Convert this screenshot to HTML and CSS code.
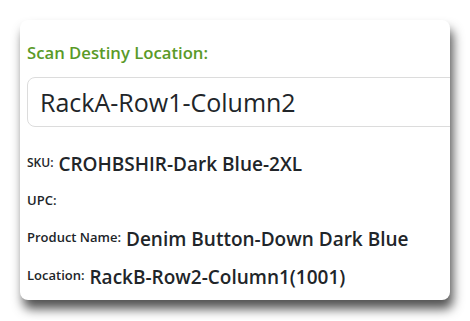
FILE: index.html
```html
<!DOCTYPE html>
<html>
<head>
    <link rel="stylesheet" href="styles.css">
</head>
<body>

<div class="card">
    <label class="scan-label" for="destiny">Scan Destiny Location:</label>
    <input type="text" id="destiny" class="scan-input" value="RackA-Row1-Column2">

    <div class="field">
        <label class="small">SKU:</label>
        <span class="value">CROHBSHIR-Dark Blue-2XL</span>
    </div>
    <div class="field empty">
        <label>UPC:</label>
    </div>
    <div class="field">
        <label>Product Name:</label>
        <span class="value">Denim Button-Down Dark Blue</span>
    </div>
    <div class="field">
        <label>Location:</label>
        <span class="value">RackB-Row2-Column1(1001)</span>
    </div>
</div>

</body>
</html>
```

FILE: styles.css
```css
/* General Styling */
body {
    font-family: "Open Sans", Arial, sans-serif;
    margin: 0;
    padding: 20px;
    background-color: #fff;
    color: #212529;
}

.card {
    width: 430px;
    height: 280px;
    box-sizing: border-box;
    background: #fff;
    border-radius: 8px;
    box-shadow: 3px 9px 11px rgba(0, 0, 0, 0.68);
    padding: 22px 0 0 7px;
    overflow: hidden;
}

.scan-label {
    display: block;
    color: #5a9a28;
    font-size: 16.7px;
    font-weight: 600;
    line-height: 22px;
    margin-bottom: 13px;
}

.scan-input {
    display: block;
    width: 460px;
    height: 50px;
    box-sizing: border-box;
    border: 1px solid #dcdcdc;
    border-radius: 8px;
    padding: 0 12px;
    font-family: inherit;
    font-size: 25px;
    color: #212529;
    margin-bottom: 24px;
}

.field {
    font-size: 19px;
    line-height: 26px;
    margin-bottom: 12px;
    white-space: nowrap;
}

.field label {
    font-size: 13px;
    font-weight: 600;
    line-height: 1;
    vertical-align: 4px;
}

.field label.small {
    font-size: 12px;
}

.field .value {
    font-weight: 600;
}

.field.empty {
    margin-bottom: 11px;
}
```
